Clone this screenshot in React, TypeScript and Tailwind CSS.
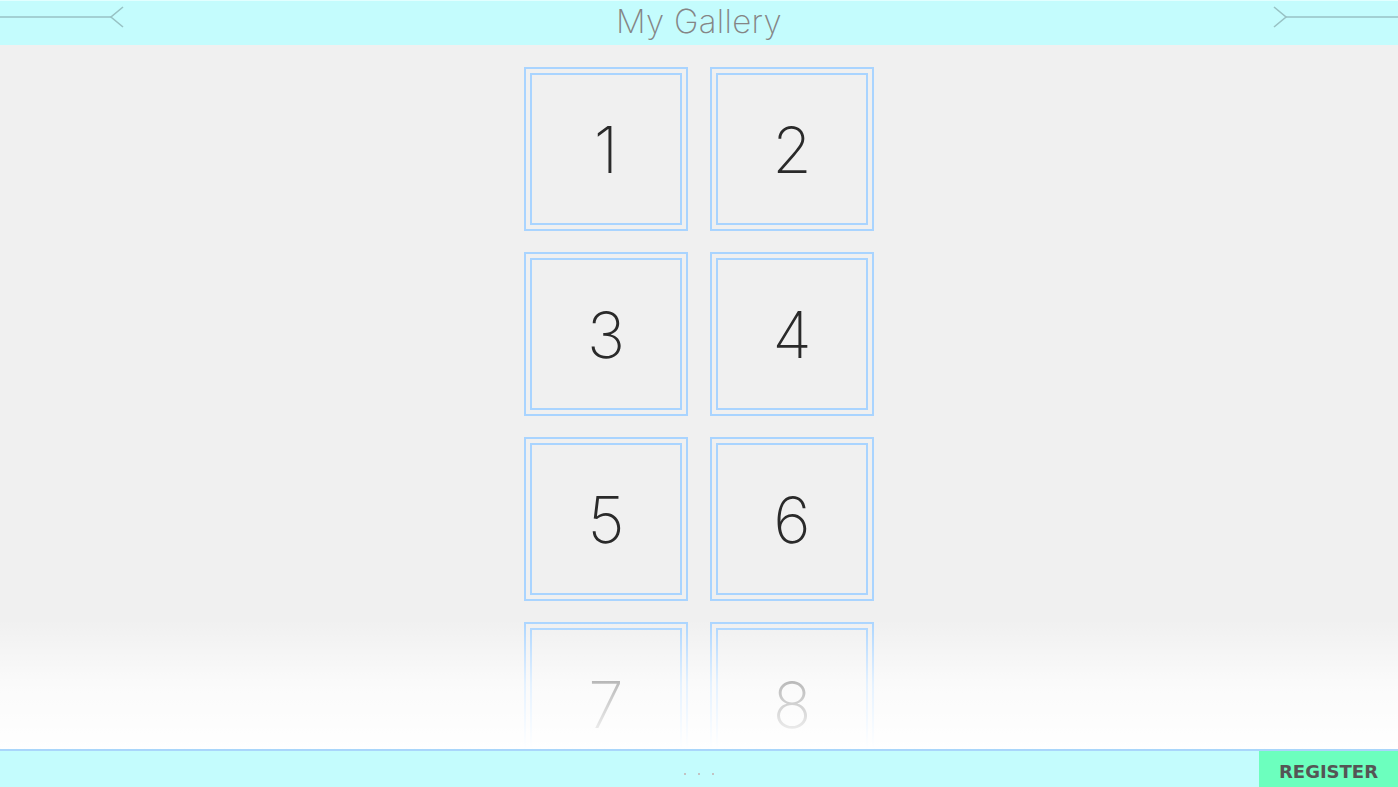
import React from "react";

const nums = [1, 2, 3, 4, 5, 6, 7, 8];

function Tile({ n }: { n: number }) {
  return (
    <div className="w-[164px] h-[164px] border-2 border-[#a9d4ff] p-[4px] shrink-0">
      <div className="w-full h-full border-2 border-[#a9d4ff] flex items-center justify-center">
        <span className="text-[64px] leading-none font-[160] text-[#2a2a2a] font-['Inter',sans-serif] pt-[2px]">
          {n}
        </span>
      </div>
    </div>
  );
}

export default function App() {
  return (
    <div className="w-[1398px] h-[787px] flex flex-col overflow-hidden bg-[#f0f0f0] font-['Inter',sans-serif]">
      {/* Header */}
      <header className="h-[45px] shrink-0 bg-[#c4fcfd] border-t border-[#e2ffff] flex items-center justify-between">
        <svg width="126" height="45" viewBox="0 0 126 45" className="shrink-0 -mt-[1px]">
          <line x1="0" y1="17" x2="111" y2="17" stroke="#98c2c4" strokeWidth="1.6" />
          <polyline points="123,7 111,17 123,27" fill="none" stroke="#98c2c4" strokeWidth="1.6" />
        </svg>
        <h1 className="text-[33px] leading-none font-extralight text-[#858585] tracking-[0.3px] -mt-[4px]">
          My Gallery
        </h1>
        <svg width="126" height="45" viewBox="0 0 126 45" className="shrink-0 -mt-[1px]">
          <polyline points="2,7 14,17 2,27" fill="none" stroke="#98c2c4" strokeWidth="1.6" />
          <line x1="14" y1="17" x2="126" y2="17" stroke="#98c2c4" strokeWidth="1.6" />
        </svg>
      </header>

      {/* Main */}
      <main className="relative flex-1 overflow-hidden">
        <div className="flex justify-center pt-[22px]">
          <div className="grid grid-cols-2 gap-x-[22px] gap-y-[21px]">
            {nums.map((n) => (
              <Tile key={n} n={n} />
            ))}
          </div>
        </div>
        <div className="pointer-events-none absolute left-0 right-0 bottom-0 h-[130px] bg-gradient-to-b from-[#ffffff00] via-[#ffffffb0] to-[#ffffff]" />
      </main>

      {/* Footer */}
      <footer className="h-[38px] shrink-0 bg-[#c4fcfd] border-t-2 border-[#a9d6fb] flex items-stretch">
        <div className="flex-1 flex items-center justify-center gap-[12px] pl-[139px] pt-[10px]">
          <span className="w-[2px] h-[2px] bg-[#c3c3c3]" />
          <span className="w-[2px] h-[2px] bg-[#c3c3c3]" />
          <span className="w-[2px] h-[2px] bg-[#c3c3c3]" />
        </div>
        <button className="w-[139px] bg-[#6cffbe] flex items-center justify-center pt-[4px] text-[18px] font-bold text-[#555555] font-['DejaVu_Sans',sans-serif]">
          REGISTER
        </button>
      </footer>
    </div>
  );
}
